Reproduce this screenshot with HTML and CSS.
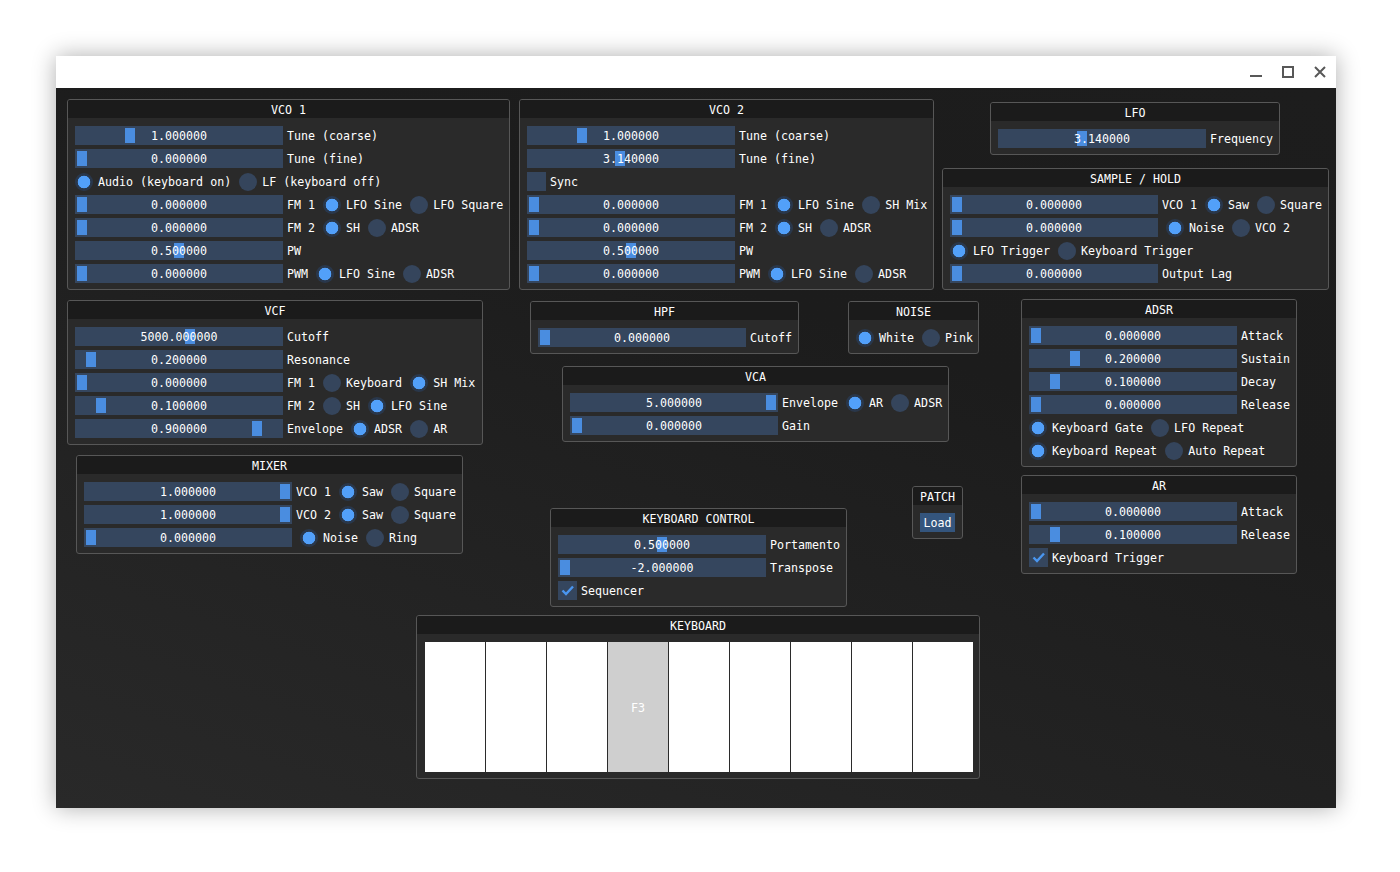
FILE: index.html
```html
<!DOCTYPE html>
<html>
<head>
<meta charset="utf-8">
<title>Synth</title>
<link rel="stylesheet" href="styles.css">
</head>
<body>
<div class="window">
  <div class="titlebar">
    <div class="ctl"><svg width="12" height="12" viewBox="0 0 12 12"><rect x="0" y="9" width="12" height="2" fill="#585858"/></svg></div>
    <div class="ctl"><svg width="12" height="12" viewBox="0 0 12 12"><rect x="1" y="1" width="10" height="10" fill="none" stroke="#585858" stroke-width="2"/></svg></div>
    <div class="ctl"><svg width="12" height="12" viewBox="0 0 12 12"><path d="M1 1 L11 11 M11 1 L1 11" stroke="#585858" stroke-width="2"/></svg></div>
  </div>
  <div class="desk">

    <section class="panel p-vco1">
      <div class="hdr">VCO 1</div>
      <div class="body">
        <div class="row"><div class="slider"><i class="grab" style="left:50px"></i><span class="val">1.000000</span></div><span class="lbl">Tune (coarse)</span></div>
        <div class="row"><div class="slider"><i class="grab" style="left:2px"></i><span class="val">0.000000</span></div><span class="lbl">Tune (fine)</span></div>
        <div class="row"><span class="radio on"><i></i>Audio (keyboard on)</span><span class="radio"><i></i>LF (keyboard off)</span></div>
        <div class="row"><div class="slider"><i class="grab" style="left:2px"></i><span class="val">0.000000</span></div><span class="lbl">FM 1</span><span class="radio on"><i></i>LFO Sine</span><span class="radio"><i></i>LFO Square</span></div>
        <div class="row"><div class="slider"><i class="grab" style="left:2px"></i><span class="val">0.000000</span></div><span class="lbl">FM 2</span><span class="radio on"><i></i>SH</span><span class="radio"><i></i>ADSR</span></div>
        <div class="row"><div class="slider"><i class="grab" style="left:99px"></i><span class="val">0.500000</span></div><span class="lbl">PW</span></div>
        <div class="row"><div class="slider"><i class="grab" style="left:2px"></i><span class="val">0.000000</span></div><span class="lbl">PWM</span><span class="radio on"><i></i>LFO Sine</span><span class="radio"><i></i>ADSR</span></div>
      </div>
    </section>

    <section class="panel p-vco2">
      <div class="hdr">VCO 2</div>
      <div class="body">
        <div class="row"><div class="slider"><i class="grab" style="left:50px"></i><span class="val">1.000000</span></div><span class="lbl">Tune (coarse)</span></div>
        <div class="row"><div class="slider"><i class="grab" style="left:88px"></i><span class="val">3.140000</span></div><span class="lbl">Tune (fine)</span></div>
        <div class="row"><span class="check"><i></i>Sync</span></div>
        <div class="row"><div class="slider"><i class="grab" style="left:2px"></i><span class="val">0.000000</span></div><span class="lbl">FM 1</span><span class="radio on"><i></i>LFO Sine</span><span class="radio"><i></i>SH Mix</span></div>
        <div class="row"><div class="slider"><i class="grab" style="left:2px"></i><span class="val">0.000000</span></div><span class="lbl">FM 2</span><span class="radio on"><i></i>SH</span><span class="radio"><i></i>ADSR</span></div>
        <div class="row"><div class="slider"><i class="grab" style="left:99px"></i><span class="val">0.500000</span></div><span class="lbl">PW</span></div>
        <div class="row"><div class="slider"><i class="grab" style="left:2px"></i><span class="val">0.000000</span></div><span class="lbl">PWM</span><span class="radio on"><i></i>LFO Sine</span><span class="radio"><i></i>ADSR</span></div>
      </div>
    </section>

    <section class="panel p-lfo">
      <div class="hdr">LFO</div>
      <div class="body">
        <div class="row"><div class="slider"><i class="grab" style="left:79px"></i><span class="val">3.140000</span></div><span class="lbl">Frequency</span></div>
      </div>
    </section>

    <section class="panel p-sh">
      <div class="hdr">SAMPLE / HOLD</div>
      <div class="body">
        <div class="row"><div class="slider"><i class="grab" style="left:2px"></i><span class="val">0.000000</span></div><span class="lbl">VCO 1</span><span class="radio on"><i></i>Saw</span><span class="radio"><i></i>Square</span></div>
        <div class="row"><div class="slider"><i class="grab" style="left:2px"></i><span class="val">0.000000</span></div><span class="radio on"><i></i>Noise</span><span class="radio"><i></i>VCO 2</span></div>
        <div class="row"><span class="radio on"><i></i>LFO Trigger</span><span class="radio"><i></i>Keyboard Trigger</span></div>
        <div class="row"><div class="slider"><i class="grab" style="left:2px"></i><span class="val">0.000000</span></div><span class="lbl">Output Lag</span></div>
      </div>
    </section>

    <section class="panel p-vcf">
      <div class="hdr">VCF</div>
      <div class="body">
        <div class="row"><div class="slider"><i class="grab" style="left:110px"></i><span class="val">5000.000000</span></div><span class="lbl">Cutoff</span></div>
        <div class="row"><div class="slider"><i class="grab" style="left:11px"></i><span class="val">0.200000</span></div><span class="lbl">Resonance</span></div>
        <div class="row"><div class="slider"><i class="grab" style="left:2px"></i><span class="val">0.000000</span></div><span class="lbl">FM 1</span><span class="radio"><i></i>Keyboard</span><span class="radio on"><i></i>SH Mix</span></div>
        <div class="row"><div class="slider"><i class="grab" style="left:21px"></i><span class="val">0.100000</span></div><span class="lbl">FM 2</span><span class="radio"><i></i>SH</span><span class="radio on"><i></i>LFO Sine</span></div>
        <div class="row"><div class="slider"><i class="grab" style="left:177px"></i><span class="val">0.900000</span></div><span class="lbl">Envelope</span><span class="radio on"><i></i>ADSR</span><span class="radio"><i></i>AR</span></div>
      </div>
    </section>

    <section class="panel p-mixer">
      <div class="hdr">MIXER</div>
      <div class="body">
        <div class="row"><div class="slider"><i class="grab" style="left:196px"></i><span class="val">1.000000</span></div><span class="lbl">VCO 1</span><span class="radio on"><i></i>Saw</span><span class="radio"><i></i>Square</span></div>
        <div class="row"><div class="slider"><i class="grab" style="left:196px"></i><span class="val">1.000000</span></div><span class="lbl">VCO 2</span><span class="radio on"><i></i>Saw</span><span class="radio"><i></i>Square</span></div>
        <div class="row"><div class="slider"><i class="grab" style="left:2px"></i><span class="val">0.000000</span></div><span class="radio on"><i></i>Noise</span><span class="radio"><i></i>Ring</span></div>
      </div>
    </section>

    <section class="panel p-hpf">
      <div class="hdr">HPF</div>
      <div class="body">
        <div class="row"><div class="slider"><i class="grab" style="left:2px"></i><span class="val">0.000000</span></div><span class="lbl">Cutoff</span></div>
      </div>
    </section>

    <section class="panel p-noise">
      <div class="hdr">NOISE</div>
      <div class="body">
        <div class="row"><span class="radio on"><i></i>White</span><span class="radio"><i></i>Pink</span></div>
      </div>
    </section>

    <section class="panel p-vca">
      <div class="hdr">VCA</div>
      <div class="body">
        <div class="row"><div class="slider"><i class="grab" style="left:196px"></i><span class="val">5.000000</span></div><span class="lbl">Envelope</span><span class="radio on"><i></i>AR</span><span class="radio"><i></i>ADSR</span></div>
        <div class="row"><div class="slider"><i class="grab" style="left:2px"></i><span class="val">0.000000</span></div><span class="lbl">Gain</span></div>
      </div>
    </section>

    <section class="panel p-adsr">
      <div class="hdr">ADSR</div>
      <div class="body">
        <div class="row"><div class="slider"><i class="grab" style="left:2px"></i><span class="val">0.000000</span></div><span class="lbl">Attack</span></div>
        <div class="row"><div class="slider"><i class="grab" style="left:41px"></i><span class="val">0.200000</span></div><span class="lbl">Sustain</span></div>
        <div class="row"><div class="slider"><i class="grab" style="left:21px"></i><span class="val">0.100000</span></div><span class="lbl">Decay</span></div>
        <div class="row"><div class="slider"><i class="grab" style="left:2px"></i><span class="val">0.000000</span></div><span class="lbl">Release</span></div>
        <div class="row"><span class="radio on"><i></i>Keyboard Gate</span><span class="radio"><i></i>LFO Repeat</span></div>
        <div class="row"><span class="radio on"><i></i>Keyboard Repeat</span><span class="radio"><i></i>Auto Repeat</span></div>
      </div>
    </section>

    <section class="panel p-ar">
      <div class="hdr">AR</div>
      <div class="body">
        <div class="row"><div class="slider"><i class="grab" style="left:2px"></i><span class="val">0.000000</span></div><span class="lbl">Attack</span></div>
        <div class="row"><div class="slider"><i class="grab" style="left:21px"></i><span class="val">0.100000</span></div><span class="lbl">Release</span></div>
        <div class="row"><span class="check"><i><svg width="19" height="19" viewBox="0 0 19 19"><path d="M4.5 9.5 L8 13 L15 5.5" fill="none" stroke="#4a96f0" stroke-width="2.4"/></svg></i>Keyboard Trigger</span></div>
      </div>
    </section>

    <section class="panel p-kbc">
      <div class="hdr">KEYBOARD CONTROL</div>
      <div class="body">
        <div class="row"><div class="slider"><i class="grab" style="left:99px"></i><span class="val">0.500000</span></div><span class="lbl">Portamento</span></div>
        <div class="row"><div class="slider"><i class="grab" style="left:2px"></i><span class="val">-2.000000</span></div><span class="lbl">Transpose</span></div>
        <div class="row"><span class="check"><i><svg width="19" height="19" viewBox="0 0 19 19"><path d="M4.5 9.5 L8 13 L15 5.5" fill="none" stroke="#4a96f0" stroke-width="2.4"/></svg></i>Sequencer</span></div>
      </div>
    </section>

    <section class="panel p-patch">
      <div class="hdr">PATCH</div>
      <div class="body">
        <div class="row"><span class="btn">Load</span></div>
      </div>
    </section>

    <section class="panel p-kb">
      <div class="hdr">KEYBOARD</div>
      <div class="body kb-body">
        <div class="keys">
          <div class="key"></div>
          <div class="key"></div>
          <div class="key"></div>
          <div class="key down">F3</div>
          <div class="key"></div>
          <div class="key"></div>
          <div class="key"></div>
          <div class="key"></div>
          <div class="key"></div>
        </div>
      </div>
    </section>

  </div>
</div>
</body>
</html>
```
FILE: styles.css
```css
html, body {
  margin: 0;
  padding: 0;
  background: #ffffff;
}
body {
  padding: 56px;
  font-family: "DejaVu Sans Mono", "Liberation Mono", monospace;
  font-size: 11.65px;
  color: #ffffff;
}
.window {
  width: 1280px;
  height: 752px;
  display: flex;
  flex-direction: column;
  box-shadow: 0 0 22px rgba(0, 0, 0, 0.32);
}
.titlebar {
  height: 32px;
  background: #ffffff;
  display: flex;
  justify-content: flex-end;
}
.ctl {
  width: 32px;
  height: 32px;
  display: flex;
  align-items: center;
  justify-content: center;
}
.desk {
  flex: 1;
  position: relative;
  background: linear-gradient(20deg, #292929 0%, #222222 35%, #1c1c1c 65%, #1d1d1d 100%);
}
.panel {
  position: absolute;
  box-sizing: border-box;
  border: 1px solid #575757;
  border-radius: 3px;
  background: #2a2a2a;
  overflow: hidden;
}
.hdr {
  height: 18px;
  line-height: 20px;
  background: #1b1b1b;
  text-align: center;
  white-space: pre;
}
.body {
  padding: 8px 7px 6px 7px;
  display: flex;
  flex-direction: column;
  gap: 4px;
}
.row {
  display: flex;
  align-items: flex-start;
  height: 19px;
  line-height: 21px;
  white-space: pre;
}
.slider {
  position: relative;
  width: 208px;
  height: 19px;
  background: #35465e;
  text-align: center;
  flex: none;
}
.grab {
  position: absolute;
  top: 2px;
  width: 10px;
  height: 15px;
  background: #4a8de0;
}
.val {
  position: relative;
}
.lbl {
  margin-left: 4px;
}
.radio {
  display: flex;
  align-items: flex-start;
  margin-left: 8px;
}
.row > .radio:first-child {
  margin-left: 0;
}
.radio i {
  width: 18px;
  height: 18px;
  margin: 0.5px 5px 0 0;
  border-radius: 50%;
  background: #35455c;
}
.radio.on i {
  background: radial-gradient(circle, #52a0fa 0, #52a0fa 6px, #29374b 6.6px);
}
.check {
  display: flex;
  align-items: flex-start;
}
.check i {
  width: 19px;
  height: 19px;
  margin-right: 4px;
  background: #35465e;
  display: block;
}
.check svg {
  display: block;
}
.btn {
  width: 36px;
  height: 19px;
  text-align: center;
  background: #34557d;
}
.p-vco1 { left: 11px; top: 11px; width: 443px; }
.p-vco2 { left: 463px; top: 11px; width: 415px; }
.p-lfo { left: 934px; top: 14px; width: 290px; }
.p-sh { left: 886px; top: 80px; width: 387px; }
.p-vcf { left: 11px; top: 212px; width: 416px; }
.p-mixer { left: 20px; top: 367px; width: 387px; }
.p-hpf { left: 474px; top: 213px; width: 269px; }
.p-noise { left: 792px; top: 213px; width: 131px; }
.p-vca { left: 506px; top: 278px; width: 387px; }
.p-adsr { left: 965px; top: 211px; width: 276px; }
.p-ar { left: 965px; top: 387px; width: 276px; }
.p-kbc { left: 494px; top: 420px; width: 297px; }
.p-patch { left: 856px; top: 398px; width: 51px; }
.p-kb { left: 360px; top: 527px; width: 564px; }
.kb-body {
  padding-left: 8px;
}
.keys {
  width: 548px;
  height: 130px;
  display: grid;
  grid-template-columns: repeat(9, 60px);
  gap: 1px;
  background: #2b2b2b;
}
.key {
  background: #ffffff;
  display: flex;
  align-items: center;
  justify-content: center;
  color: #ffffff;
  padding-top: 2px;
}
.key.down {
  background: #cfcfcf;
}
```
